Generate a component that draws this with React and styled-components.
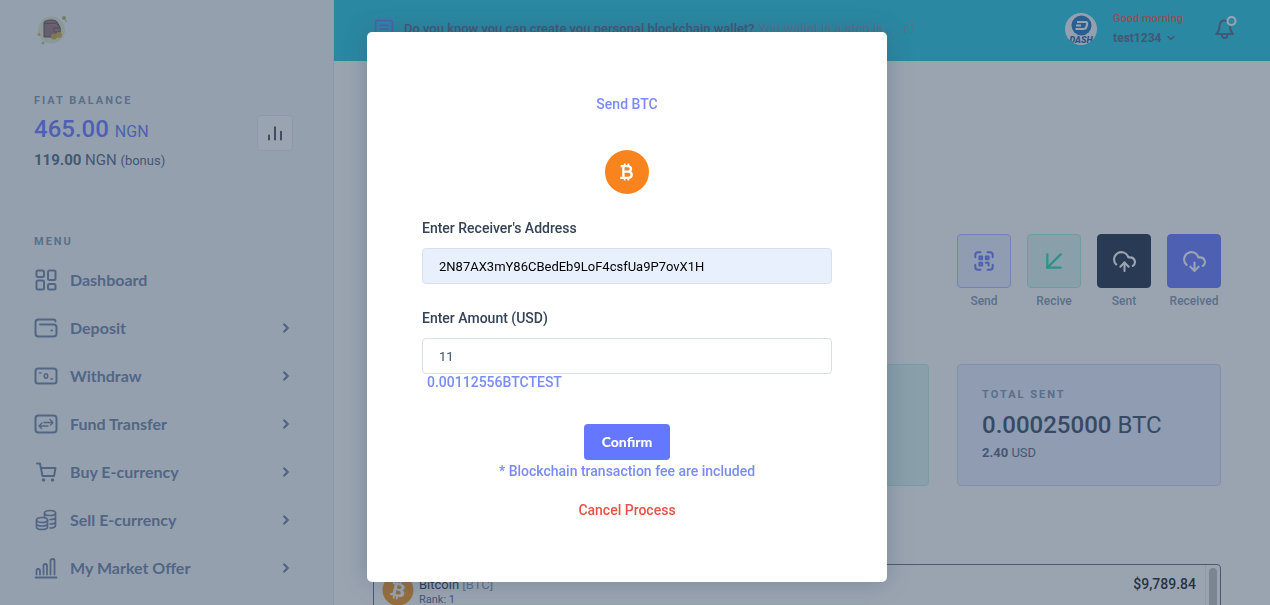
import { useState } from "react";
import styled, { createGlobalStyle } from "styled-components";
import {
  ArrowDownLeft,
  ChevronDown,
  ChevronRight,
  CloudDownload,
  CloudUpload,
  ExternalLink,
} from "lucide-react";
import { FaBitcoin } from "react-icons/fa";

const GlobalStyle = createGlobalStyle`
  * {
    box-sizing: border-box;
  }
  body {
    margin: 0;
    font-family: Roboto, "Liberation Sans", sans-serif;
    font-size: 14px;
    line-height: 20px;
    color: #526484;
    background-color: #ffffff;
  }
  button, input {
    font-family: inherit;
  }
`;

const Page = styled.div`
  display: flex;
  height: 100vh;
  overflow: hidden;
`;

/* ---- SIDEBAR START ---- */
const Sidebar = styled.aside`
  flex: 0 0 334px;
  padding: 14px 40px 0 34px;
  background-color: #f5f6fa;
  border-right: 1px solid #e5e9f2;
`;

const Logo = styled.a`
  display: block;
  width: 36px;
  height: 32px;
`;

const Overline = styled.h6`
  margin: 0;
  font-size: 11px;
  line-height: 16px;
  font-weight: 700;
  letter-spacing: 2px;
  text-transform: uppercase;
  color: #8094ae;
`;

const Balance = styled.section`
  display: flex;
  align-items: center;
  justify-content: space-between;
  margin: 47px 0 62px;
`;

const BalanceAmount = styled.div`
  padding-top: 5px;
  font-size: 24px;
  line-height: 30px;
  font-weight: 500;
  color: #6576ff;

  small {
    font-size: 16px;
    font-weight: 400;
  }
`;

const Bonus = styled.div`
  padding-top: 2px;
  font-size: 15px;
  line-height: 22px;

  small {
    font-size: 13px;
  }
`;

const StatsButton = styled.button`
  display: flex;
  align-items: center;
  justify-content: center;
  width: 36px;
  height: 36px;
  padding: 0;
  color: #101924;
  background-color: #ffffff;
  border: 1px solid #e5e9f2;
  border-radius: 4px;
`;

const Menu = styled.nav`
  padding-top: 6px;
`;

const MenuItem = styled.a`
  display: flex;
  align-items: center;
  height: 48px;
  font-family: Lato, "Open Sans", sans-serif;
  font-size: 16px;
  font-weight: 700;
  color: #6e82a5;
  text-decoration: none;

  svg:first-child {
    margin-right: 12px;
  }
`;

const MenuText = styled.span`
  flex: 1;
  padding-bottom: 1px;
`;
/* ---- SIDEBAR END ---- */

/* ---- CONTENT START ---- */
const Main = styled.main`
  flex: 1;
  min-width: 0;
`;

const Header = styled.header`
  display: flex;
  align-items: center;
  justify-content: space-between;
  height: 61px;
  padding: 0 33px 3px 40px;
  background-color: #20c6e1;
`;

const Notice = styled.a`
  display: flex;
  align-items: center;
  gap: 10px;
  font-size: 13px;
  font-weight: 500;
  color: #526484;
  text-decoration: none;
  white-space: nowrap;

  em {
    margin: 0 0 0 -6px;
    font-style: normal;
    font-weight: 400;
    color: #8094ae;
  }
`;

const UserArea = styled.div`
  display: flex;
  align-items: center;
`;

const UserInfo = styled.button`
  margin: 0 30px 2px 16px;
  padding: 0;
  text-align: left;
  background: none;
  border: 0;
`;

const Greeting = styled.span`
  display: block;
  font-size: 11px;
  line-height: 20px;
  font-weight: 500;
  color: #e85347;
`;

const UserName = styled.span`
  display: flex;
  align-items: center;
  gap: 4px;
  font-size: 12px;
  line-height: 18px;
  font-weight: 700;
  color: #526484;
`;

const BellButton = styled.button`
  display: flex;
  padding: 0 0 2px;
  color: #526484;
  background: none;
  border: 0;
`;

const Content = styled.div`
  padding: 173px 49px 0 39px;
`;

const Actions = styled.div`
  display: flex;
  justify-content: flex-end;
  gap: 16px;
`;

const Action = styled.a`
  display: flex;
  flex-direction: column;
  align-items: center;
  gap: 3px;
  width: 54px;
  font-size: 12px;
  font-weight: 500;
  color: #8094ae;
  text-decoration: none;
`;

const ActionIcon = styled.span`
  display: flex;
  align-items: center;
  justify-content: center;
  width: 54px;
  height: 54px;
  color: ${(props) => props.$color};
  background-color: ${(props) => props.$bg};
  border: 1px solid ${(props) => props.$border};
  border-radius: 4px;
`;

const Cards = styled.div`
  display: grid;
  grid-template-columns: repeat(3, 1fr);
  gap: 28px;
  margin: 53px 0 78px;
`;

const Card = styled.section`
  height: 122px;
  padding: 22px 24px;
  background-color: ${(props) => props.$bg};
  border: 1px solid ${(props) => props.$border};
  border-radius: 4px;
`;

const CardAmount = styled.div`
  padding-top: 6px;
  font-size: 24px;
  line-height: 32px;
  font-weight: 500;
  color: #364a63;

  small {
    font-size: 24px;
    font-weight: 400;
  }
`;

const CardSub = styled.div`
  padding-top: 2px;
  font-size: 13px;
`;

const Coins = styled.div`
  display: flex;
  gap: 3px;
  height: 240px;
  padding-right: 3px;
  border: 1px solid #5e6a80;
  border-radius: 4px;
`;

const CoinTable = styled.table`
  flex: 1;
  align-self: flex-start;
  border-collapse: collapse;
  border-right: 1px solid #e5e9f2;

  td {
    padding: 9px 9px 0 0;
    vertical-align: top;
  }
`;

const CoinRow = styled.div`
  display: flex;
  gap: 5px;
  padding-left: 8px;
`;

const CoinName = styled.div`
  font-size: 13px;
  line-height: 22px;
  color: #1c2b46;

  span {
    color: #8094ae;
  }
`;

const CoinRank = styled.div`
  font-size: 11px;
  line-height: 8px;
  color: #526484;
`;

const Price = styled.td`
  text-align: right;
  font-weight: 500;
  color: #101924;
`;

const Thumb = styled.div`
  width: 8px;
  margin-top: 3px;
  background-color: #c1c1c1;
  border-radius: 4px;
`;
/* ---- CONTENT END ---- */

/* ---- MODAL START ---- */
const Backdrop = styled.div`
  position: fixed;
  inset: 0;
  display: flex;
  align-items: flex-start;
  justify-content: center;
  padding: 32px 16px 0 0;
  background-color: rgba(54, 74, 99, 0.5);
`;

const Dialog = styled.form`
  display: flex;
  flex-direction: column;
  align-items: center;
  width: 520px;
  padding: 62px 55px;
  background-color: #ffffff;
  border-radius: 5px;
  box-shadow: 0 0 24px rgba(54, 74, 99, 0.3);
`;

const Title = styled.h2`
  margin: 0 0 36px;
  font-size: 14px;
  line-height: 20px;
  font-weight: 500;
  color: #798bff;
`;

const CoinBadge = styled.div`
  display: flex;
  align-items: center;
  justify-content: center;
  width: 44px;
  height: 44px;
  background-color: #f9841e;
  border-radius: 50%;
`;

const Label = styled.label`
  align-self: stretch;
  margin: 24px 0 10px;
  font-weight: 500;
  color: #344357;
`;

const Input = styled.input`
  align-self: stretch;
  height: 36px;
  padding: 0 16px;
  font-size: 13px;
  color: ${(props) => (props.$filled ? "#000000" : "#3c4d62")};
  background-color: ${(props) => (props.$filled ? "#e8f0fe" : "#ffffff")};
  border: 1px solid #dbdfea;
  border-radius: 4px;
  outline: none;
`;

const Converted = styled.output`
  align-self: stretch;
  padding-left: 5px;
  line-height: 16px;
  font-weight: 500;
  color: #798bff;
`;

const Confirm = styled.button`
  height: 36px;
  margin-top: 34px;
  padding: 0 18px 2px;
  font-family: Lato, "Open Sans", sans-serif;
  font-size: 14px;
  font-weight: 900;
  color: #ffffff;
  background-color: #6576ff;
  border: 0;
  border-radius: 4px;
`;

const Fee = styled.p`
  margin: 0 0 18px;
  line-height: 22px;
  font-weight: 500;
  color: #798bff;
`;

const Cancel = styled.a`
  font-weight: 500;
  color: #e85347;
  text-decoration: none;
`;
/* ---- MODAL END ---- */

/* ---- ICONS ---- */
const Icon = ({ children, size = 24, width = 2 }) => (
  <svg
    width={size}
    height={size}
    viewBox="0 0 24 24"
    fill="none"
    stroke="currentColor"
    strokeWidth={width}
    strokeLinecap="round"
    strokeLinejoin="round"
    aria-hidden="true"
  >
    {children}
  </svg>
);

const WalletLogo = () => (
  <svg width="36" height="32" viewBox="0 0 36 32" role="img" aria-label="Wallet">
    <circle cx="17.5" cy="16" r="13.5" fill="#e3e6c4" />
    <path d="M10 9c0-1.500 1-2 2-2 3-1.500 9-1.500 11 1l3 5v7l-3 3H10z" fill="#94747a" stroke="#5d4a55" />
    <path d="M10 9.500h11c2 0 3 1 3 3M20 14h6v4h-6z" fill="#a87c7e" stroke="#6d535c" />
    <circle cx="20" cy="22.500" r="3" fill="#cba23e" />
    <circle cx="25" cy="21" r="3" fill="#d4ac42" />
    <circle cx="5" cy="20.500" r="1.500" fill="#d8b54c" />
    <circle cx="30" cy="4" r="2" fill="#a8b66c" />
    <circle cx="32" cy="7" r="1" fill="#c7cb8c" />
    <circle cx="9" cy="29" r="1.500" fill="#b7c391" />
  </svg>
);

const StatsIcon = () => (
  <Icon size={18} width={2}>
    <path d="M4 15v6M12 4v17M20 10v11" />
  </Icon>
);

const DashboardIcon = () => (
  <Icon width={2}>
    <rect x="2.500" y="2.500" width="7.500" height="6.500" rx="1.500" />
    <rect x="14" y="2.500" width="7.500" height="9.500" rx="1.500" />
    <rect x="2.500" y="12.500" width="7.500" height="9" rx="1.500" />
    <rect x="14" y="16" width="7.500" height="5.500" rx="1.500" />
  </Icon>
);

const DepositIcon = () => (
  <Icon width={2}>
    <path d="M21.500 5.500c0-1-.7-2-2-2H4.500c-2 0-3 1-3 3v11c0 2 1 3 3 3h15c2 0 3-1 3-3v-6c0-2-1-3-3-3H6" />
    <path d="M17.500 14.500h.5" />
  </Icon>
);

const WithdrawIcon = () => (
  <Icon width={2}>
    <rect x="1.500" y="4.500" width="21" height="15" rx="2.500" />
    <ellipse cx="12" cy="12" rx="1.700" ry="2.200" strokeWidth="1.500" />
    <path d="M5.500 9h1.500M17 15h1.500" strokeWidth="1.500" />
  </Icon>
);

const TransferIcon = () => (
  <Icon width={2}>
    <rect x="1.500" y="3.500" width="21" height="17" rx="3" />
    <path d="M10 10.500h8.500M16 7.500l3 3-2.500 2.500M14 14H5.500M8 11l-3 3 2.500 2.500" strokeWidth="1.400" />
  </Icon>
);

const CartIcon = () => (
  <Icon width={2}>
    <path d="M3 3.500h3l2.500 12.500h11.500L21.500 8H7" />
    <circle cx="9.500" cy="20" r="1" fill="currentColor" strokeWidth="1.500" />
    <circle cx="18.500" cy="20" r="1" fill="currentColor" strokeWidth="1.500" />
  </Icon>
);

const CoinsIcon = () => (
  <Icon width={1.7}>
    <ellipse cx="16" cy="5" rx="5.500" ry="2.500" />
    <path d="M10.500 5v4M21.500 5v12.500c0 1.400-2.500 2.500-5.500 2.500M21.500 9c0 1.400-2.500 2.500-5.500 2.500M21.500 13.500c0 1.400-2.500 2.500-5.500 2.500" />
    <ellipse cx="8" cy="12" rx="5.500" ry="2.500" />
    <path d="M2.500 12v7c0 1.400 2.500 2.500 5.500 2.500s5.500-1.100 5.500-2.500v-7M2.500 15.500c0 1.400 2.500 2.500 5.500 2.500s5.500-1.100 5.500-2.500" />
  </Icon>
);

const MarketIcon = () => (
  <Icon width={1.8}>
    <path d="M1.500 21.500h21" />
    <path d="M2.500 18.500v-4c0-1 .6-1.500 1.500-1.500h.5c1 0 1.500.5 1.500 1.500v4M9.500 18.500v-9C9.500 8.500 10 8 11 8s2 .5 2 1.500v9M16.500 18.500v-14c0-1 .8-1.500 2-1.500s2 .5 2 1.500v14" />
  </Icon>
);

const NoteIcon = () => (
  <Icon size={20} width={2}>
    <rect x="2" y="2" width="20" height="20" rx="2" stroke="#6576ff" />
    <path d="M7 7.500h10M7 12h10M7 16.500h6" stroke="#6576ff" />
  </Icon>
);

const DashAvatar = () => (
  <svg width="32" height="32" viewBox="0 0 32 32" role="img" aria-label="DASH">
    <defs>
      <clipPath id="avatar">
        <circle cx="16" cy="16" r="16" />
      </clipPath>
    </defs>
    <g clipPath="url(#avatar)">
      <rect width="32" height="32" fill="#f3f6fb" />
      <circle cx="16.500" cy="12.500" r="10" fill="#1c75bc" />
      <path d="M12 9h8.500c1.500 0 2 .8 1.600 2.200l-.6 2.300c-.4 1.600-1.300 2.500-3 2.500h-8M11 12.500h5" fill="none" stroke="#fff" strokeWidth="2.200" />
      <text x="16" y="30" textAnchor="middle" fontFamily="Roboto, sans-serif" fontSize="9" fontWeight="900" fontStyle="italic" fill="#1c5ba8">
        DASH
      </text>
    </g>
  </svg>
);

const BellIcon = () => (
  <Icon width={2}>
    <path d="M13.500 5C9 3.500 6.500 6.500 6.500 10c0 4-1 6-3.500 8h17c-2-2-3-4-3-7" />
    <path d="M9 19c0 4 5.500 4 5.500 0" />
    <circle cx="18.500" cy="5" r="4" stroke="#ffffff" />
  </Icon>
);

const QrIcon = () => (
  <Icon size={22} width={2.2}>
    <path d="M2.500 8V5.500c0-1.500 1-3 3-3H8M16 2.500h2.500c2 0 3 1.500 3 3V8M21.500 16v2.500c0 1.500-1 3-3 3H16M8 21.500H5.500c-2 0-3-1.500-3-3V16" />
    <rect x="7" y="7" width="3" height="3" />
    <rect x="14" y="7" width="3" height="3" />
    <rect x="7" y="14" width="3" height="3" />
    <path d="M14 14h3v3" />
  </Icon>
);

const BitcoinMark = () => (
  <svg width="18" height="20" viewBox="0 0 20 22" fill="none" stroke="#ffffff" aria-hidden="true">
    <path d="M3 4.500h8c4.600 0 4.600 6 0 6H6M11 10.500c5.600 0 5.600 7 0 7H2.500M6 4.500v13" strokeWidth="2.600" />
    <path d="M7.500 1.500v3M11.500 1.500v3M7.500 17.500v3M11.500 17.500v3" strokeWidth="2" />
  </svg>
);

const menu = [
  { text: "Dashboard", icon: DashboardIcon },
  { text: "Deposit", icon: DepositIcon, more: true },
  { text: "Withdraw", icon: WithdrawIcon, more: true },
  { text: "Fund Transfer", icon: TransferIcon, more: true },
  { text: "Buy E-currency", icon: CartIcon, more: true },
  { text: "Sell E-currency", icon: CoinsIcon, more: true },
  { text: "My Market Offer", icon: MarketIcon, more: true },
];

const actions = [
  { text: "Send", icon: <QrIcon />, color: "#6576ff", bg: "#ebeeff", border: "#b2baff" },
  { text: "Recive", icon: <ArrowDownLeft size={32} strokeWidth={1.7} />, color: "#1ee0ac", bg: "#dcf5f0", border: "#a5f0dd" },
  { text: "Sent", icon: <CloudUpload size={25} />, color: "#ffffff", bg: "#1c2b46", border: "#1c2b46" },
  { text: "Received", icon: <CloudDownload size={25} />, color: "#ffffff", bg: "#6576ff", border: "#6576ff" },
];

const SendModal = () => {
  const [address, setAddress] = useState("2N87AX3mY86CBedEb9LoF4csfUa9P7ovX1H");
  const [amount, setAmount] = useState("11");

  return (
    <Backdrop>
      <Dialog role="dialog" aria-labelledby="send-title" onSubmit={(e) => e.preventDefault()}>
        <Title id="send-title">Send BTC</Title>
        <CoinBadge>
          <BitcoinMark />
        </CoinBadge>
        <Label htmlFor="address">Enter Receiver's Address</Label>
        <Input id="address" $filled value={address} onChange={(e) => setAddress(e.target.value)} />
        <Label htmlFor="amount">Enter Amount (USD)</Label>
        <Input id="amount" value={amount} onChange={(e) => setAmount(e.target.value)} />
        <Converted htmlFor="amount">0.00112556BTCTEST</Converted>
        <Confirm type="submit">Confirm</Confirm>
        <Fee>* Blockchain transaction fee are included</Fee>
        <Cancel href="#">Cancel Process</Cancel>
      </Dialog>
    </Backdrop>
  );
};

const App = () => {
  return (
    <>
      <GlobalStyle />
      <Page>
        <Sidebar>
          <Logo href="#">
            <WalletLogo />
          </Logo>
          <Balance>
            <div>
              <Overline>Fiat Balance</Overline>
              <BalanceAmount>
                465.00 <small>NGN</small>
              </BalanceAmount>
              <Bonus>
                <b>119.00</b> NGN <small>(bonus)</small>
              </Bonus>
            </div>
            <StatsButton aria-label="Statistics">
              <StatsIcon />
            </StatsButton>
          </Balance>
          <Overline>Menu</Overline>
          <Menu>
            {menu.map(({ text, icon: ItemIcon, more }) => (
              <MenuItem href="#" key={text}>
                <ItemIcon />
                <MenuText>{text}</MenuText>
                {more && <ChevronRight size={14} strokeWidth={4} />}
              </MenuItem>
            ))}
          </Menu>
        </Sidebar>
        <Main>
          <Header>
            <Notice href="#">
              <NoteIcon />
              <span>Do you know you can create you personal blockchain wallet?</span>
              <em>You wallet is a step is ..</em>
              <ExternalLink size={12} color="#8094ae" />
            </Notice>
            <UserArea>
              <DashAvatar />
              <UserInfo>
                <Greeting>Good morning</Greeting>
                <UserName>
                  test1234 <ChevronDown size={12} strokeWidth={3} />
                </UserName>
              </UserInfo>
              <BellButton aria-label="Notifications">
                <BellIcon />
              </BellButton>
            </UserArea>
          </Header>
          <Content>
            <Actions>
              {actions.map((item) => (
                <Action href="#" key={item.text}>
                  <ActionIcon $color={item.color} $bg={item.bg} $border={item.border}>
                    {item.icon}
                  </ActionIcon>
                  {item.text}
                </Action>
              ))}
            </Actions>
            <Cards>
              <Card $bg="#eff1ff" $border="#dbdfea" />
              <Card $bg="#dcf5f0" $border="#bdeee2" />
              <Card $bg="#ebeeff" $border="#ced4f5">
                <Overline>Total Sent</Overline>
                <CardAmount>
                  0.00025000 <small>BTC</small>
                </CardAmount>
                <CardSub>
                  <b>2.40</b> USD
                </CardSub>
              </Card>
            </Cards>
            <Coins>
              <CoinTable>
                <tbody>
                  <tr>
                    <td>
                      <CoinRow>
                        <FaBitcoin size={32} color="#f7931a" />
                        <div>
                          <CoinName>
                            Bitcoin <span>[BTC]</span>
                          </CoinName>
                          <CoinRank>Rank: 1</CoinRank>
                        </div>
                      </CoinRow>
                    </td>
                    <Price>$9,789.84</Price>
                  </tr>
                </tbody>
              </CoinTable>
              <Thumb />
            </Coins>
          </Content>
        </Main>
      </Page>
      <SendModal />
    </>
  );
};

export default App;
